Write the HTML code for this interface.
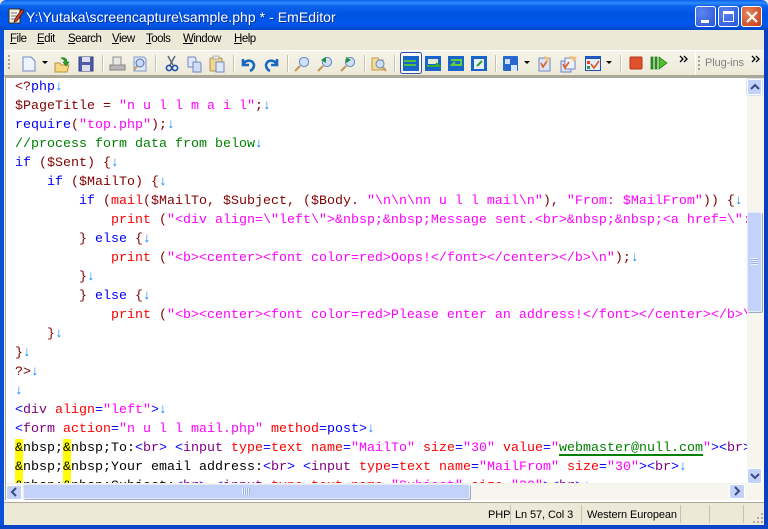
<!DOCTYPE html>
<html><head><meta charset="utf-8"><style>
*{box-sizing:border-box;margin:0;padding:0}
html,body{width:768px;height:529px;overflow:hidden;background:#ece9d8}
body{position:relative;font-family:"Liberation Sans",sans-serif}
.a{position:absolute}
#title{left:0;top:0;width:768px;height:30px;background:linear-gradient(#0a5fe8 0,#2f8cff 3px,#0a62ea 6px,#0054e3 14px,#0058ee 24px,#0049c8 30px);border-radius:6px 6px 0 0}
#tt{left:26px;top:9px;color:#fff;font-size:14px;letter-spacing:.05px;white-space:nowrap;text-shadow:1px 1px 0 #0a2f9a}
.wb{top:6px;width:21px;height:21px;border:1px solid #fff;border-radius:3px;background:radial-gradient(circle at 30% 30%,#5c85ee,#2a55d8)}
#menu{left:4px;top:30px;width:760px;height:20px;font-size:11.5px;letter-spacing:-.5px;color:#000}
#menu span{position:absolute;top:3px}
#menu u{text-decoration:underline}
.sep{top:55px;height:17px;background:#c5c2b0;border-right:1px solid #fff;width:2px}
.grip{width:2px;height:16px;background:repeating-linear-gradient(#a8a595 0 2px,transparent 2px 4px)}
#ed{left:6px;top:78px;width:741px;height:405px;background:#fff;overflow:hidden}
#ln{position:absolute;left:9px;top:0;font:13.33px/19px "Liberation Mono",monospace;color:#000}
#ln div{height:19px;white-space:pre}
.v{color:#800000}.k{color:#0000ff}.s{color:#ff00ff}.c{color:#008000}.n{color:#0080ff}.r{color:#ff0000}.p{color:#800080}.t{color:#0000ff}
.h{background:#ffff00;display:inline-block;height:19px;line-height:19px;vertical-align:top}
.f{color:#ff0000}
.ul{color:#008000;text-decoration:underline;text-decoration-color:#008000;text-decoration-thickness:1.5px;text-underline-offset:3px}
svg{position:absolute;overflow:visible}
</style></head><body>
<div class="a" style="left:0;top:30px;width:4px;height:499px;background:#0a50d8"></div>
<div class="a" style="left:764px;top:30px;width:4px;height:499px;background:#0a40c0"></div>
<div class="a" style="left:0;top:525px;width:768px;height:4px;background:#0a45c8"></div>
<div class="a" id="title"></div>
<svg style="left:8px;top:8px" width="16" height="16"><rect x="1" y="1" width="11" height="14" fill="#f4f0e0" stroke="#403020"/><path d="M3 5h6M3 8h6M3 11h4" stroke="#777"/><path d="M14 1L7 11l-1 3 3-1 7-10z" fill="#d84020" stroke="#301008" stroke-width=".7"/></svg>
<div class="a" id="tt">Y:\Yutaka\screencapture\sample.php * - EmEditor</div>
<div class="a wb" style="left:695px"><div class="a" style="left:5px;top:13px;width:8px;height:3px;background:#fff"></div></div>
<div class="a wb" style="left:718px"><div class="a" style="left:4px;top:4px;width:11px;height:11px;border:1px solid #fff;border-top:3px solid #fff"></div></div>
<div class="a wb" style="left:741px;background:radial-gradient(circle at 30% 30%,#e8845c,#c83a15)"><svg style="left:4px;top:4px" width="12" height="12"><path d="M1 1l10 10M11 1L1 11" stroke="#fff" stroke-width="2.2"/></svg></div>

<div class="a" id="menu">
<span style="left:6px"><u>F</u>ile</span><span style="left:33px"><u>E</u>dit</span><span style="left:64px"><u>S</u>earch</span><span style="left:108px"><u>V</u>iew</span><span style="left:142px"><u>T</u>ools</span><span style="left:179px"><u>W</u>indow</span><span style="left:230px"><u>H</u>elp</span>
</div>
<div class="a" style="left:4px;top:50px;width:760px;height:1px;background:#fff"></div>
<div class="a" style="left:4px;top:51px;width:760px;height:25px;background:linear-gradient(#f6f4ea,#ece9d8)"></div>
<div class="a" style="left:4px;top:75px;width:760px;height:2px;background:#aca899"></div>

<div class="a grip" style="left:8px;top:55px"></div>
<svg style="left:0;top:0" width="768" height="80">
<path d="M23 57h8l4 4v10H23z" fill="#eef2fc" stroke="#7088c8"/>
<path d="M42 61h6l-3 3z" fill="#000"/>
<path d="M55 63h5l1 2h8l-2 7H55z" fill="#f6d880" stroke="#b89040"/><path d="M61 58c4-1 6 1 6 4h2l-3 4-3-4h2c0-2-2-3-4-4z" fill="#30a030" stroke="#107010" stroke-width=".6"/>
<rect x="79" y="57" width="14" height="14" fill="#4c5ca8" stroke="#303c80"/><rect x="82" y="57" width="8" height="5" fill="#dde"/><rect x="82" y="65" width="8" height="6" fill="#dde"/>
<path d="M110 65h15v5h-15z" fill="#b8b8b8" stroke="#808080"/><path d="M113 57h8v8h-8z" fill="#e8e8e8" stroke="#909090"/>
<path d="M134 57h10l2 2v12h-12z" fill="#e0e8f8" stroke="#8098c8"/><circle cx="140" cy="63" r="4" fill="#c8d8f8" stroke="#5070b0"/><path d="M137 66l-3 4" stroke="#c8a060" stroke-width="2"/>
<path d="M168 56l5 9M175 56l-5 9" stroke="#606878" stroke-width="1.5"/><circle cx="169" cy="68" r="2.6" fill="none" stroke="#2050a8" stroke-width="1.6"/><circle cx="175" cy="68" r="2.6" fill="none" stroke="#2050a8" stroke-width="1.6"/>
<path d="M188 57h7l1 2v8h-8z" fill="#e0e8f8" stroke="#7088c0"/><path d="M193 62h7l1 2v8h-8z" fill="#d0dcf4" stroke="#7088c0"/>
<rect x="210" y="58" width="12" height="13" rx="1" fill="#f0d890" stroke="#b09050"/><rect x="213" y="56" width="6" height="3" fill="#e8e8e8" stroke="#909090" stroke-width=".6"/><rect x="216" y="62" width="8" height="10" fill="#e0e8f8" stroke="#7088c0"/>
<path d="M243 59v6h6M243 64c4-5 10-4 11 1 0 3-2 5-4 6" fill="none" stroke="#1868c0" stroke-width="2.6"/>
<path d="M277 59v6h-6M277 64c-4-5-10-4-11 1 0 3 2 5 4 6" fill="none" stroke="#1868c0" stroke-width="2.6"/>
<circle cx="304" cy="62" r="4.6" fill="#d0e0fa" stroke="#6088c0"/><path d="M300 66l-5 5" stroke="#c89860" stroke-width="2.2"/>
<circle cx="327" cy="62" r="4.6" fill="#d0e0fa" stroke="#6088c0"/><path d="M323 66l-5 5" stroke="#c89860" stroke-width="2.2"/><path d="M321 60l5-3v6z" fill="#209030"/>
<circle cx="350" cy="62" r="4.6" fill="#d0e0fa" stroke="#6088c0"/><path d="M346 66l-5 5" stroke="#c89860" stroke-width="2.2"/><path d="M351 60l-5-3v6z" fill="#209030"/>
<path d="M372 58h6l1 2h4v10h-11z" fill="#f6dc98" stroke="#c09848"/><circle cx="380" cy="64" r="4" fill="#d0e0fa" stroke="#6088c0"/><path d="M383 67l3 4" stroke="#c89860" stroke-width="2"/>
<rect x="400.500" y="52.500" width="21" height="21" rx="2" fill="#fafafa" stroke="#3050a8"/>
<rect x="403" y="56" width="16" height="15" fill="#1864c8"/><path d="M404 61h12M404 65h12" stroke="#50c040" stroke-width="2"/>
<rect x="425" y="56" width="16" height="15" fill="#1864c8"/><rect x="428" y="59" width="10" height="5" fill="#e8e8d8"/><path d="M427 66h12l-3-3" stroke="#30b030" stroke-width="2" fill="none"/>
<rect x="448" y="56" width="16" height="15" fill="#1864c8"/><path d="M451 60h10v5h-9l3-3" fill="none" stroke="#60d040" stroke-width="2"/>
<rect x="471" y="56" width="16" height="15" fill="#1864c8"/><rect x="474" y="59" width="10" height="10" fill="#e8f0fc"/><path d="M477 66l5-5" stroke="#30a030" stroke-width="2"/>
<rect x="503" y="56" width="15" height="15" rx="1" fill="#2868d0"/><rect x="505" y="59" width="5" height="5" fill="#d0e0f8"/><rect x="511" y="65" width="6" height="6" fill="#d8e8ff"/>
<path d="M524 61h6l-3 3z" fill="#000"/>
<rect x="539" y="58" width="11" height="13" fill="#dce4f4" stroke="#7088c0"/><path d="M541 63l2 4 4-6" stroke="#e06020" stroke-width="1.6" fill="none"/><path d="M544 56l6 2-3 4z" fill="#f6c070"/>
<rect x="561" y="61" width="10" height="11" fill="#dce4f4" stroke="#7088c0"/><rect x="565" y="58" width="10" height="11" fill="#eef2fc" stroke="#7088c0"/><path d="M563 64l2 4 4-6" stroke="#e06020" stroke-width="1.6" fill="none"/><path d="M569 56l8 1-3 5z" fill="#f6c070"/>
<rect x="585.500" y="56.500" width="15" height="14" fill="#e8f0fc" stroke="#2050b0"/><rect x="586" y="56" width="15" height="3" fill="#2058c0"/><rect x="587" y="61" width="3" height="3" fill="#e04020"/><rect x="587" y="66" width="3" height="3" fill="#20a040"/><path d="M591 64l3 4 5-7" stroke="#e05020" stroke-width="1.6" fill="none"/>
<path d="M606 61h6l-3 3z" fill="#000"/>
<rect x="630" y="57" width="12" height="12" rx="1" fill="#e0502c" stroke="#b03818"/>
<path d="M651 57h2v12h-2zM655 57h2v12h-2z" fill="#30a020" stroke="#107010" stroke-width=".7"/><path d="M659 57l8 6-8 6z" fill="#50c030" stroke="#107010" stroke-width=".7"/>
<path d="M680 56l3 3-3 3M684 56l3 3-3 3" fill="none" stroke="#000" stroke-width="1.3"/>
<path d="M752 56l3 3-3 3M756 56l3 3-3 3" fill="none" stroke="#000" stroke-width="1.3"/>
</svg>
<div class="a sep" style="left:102px"></div><div class="a sep" style="left:155px"></div><div class="a sep" style="left:233px"></div><div class="a sep" style="left:287px"></div><div class="a sep" style="left:364px"></div><div class="a sep" style="left:394px"></div><div class="a sep" style="left:495px"></div><div class="a sep" style="left:620px"></div>
<div class="a" style="left:695px;top:51px;width:1px;height:24px;background:#fff"></div>
<div class="a grip" style="left:698px;top:56px"></div>
<div class="a" style="left:705px;top:57px;font-size:11px;letter-spacing:-.1px;color:#808080">Plug-ins</div>

<div class="a" style="left:4px;top:77px;width:760px;height:426px;background:#f4f2e8"></div>
<div class="a" style="left:5px;top:76px;width:759px;height:2px;background:#aca899"></div>
<div class="a" style="left:5px;top:76px;width:1px;height:424px;background:#aca899"></div>
<div class="a" id="ed"><div id="ln">
<div><span class="v">&lt;?</span><span class="k">php</span><span class="n">↓</span></div>
<div><span class="v">$PageTitle = </span><span class="s">"n u l l m a i l"</span><span class="v">;</span><span class="n">↓</span></div>
<div><span class="k">require</span><span class="v">(</span><span class="s">"top.php"</span><span class="v">);</span><span class="n">↓</span></div>
<div><span class="c">//process form data from below</span><span class="n">↓</span></div>
<div><span class="k">if</span> <span class="v">($Sent) {</span><span class="n">↓</span></div>
<div>    <span class="k">if</span> <span class="v">($MailTo) {</span><span class="n">↓</span></div>
<div>        <span class="k">if</span> <span class="v">(</span><span class="r">mail</span><span class="v">($MailTo, $Subject, ($Body. </span><span class="s">"\n\n\nn u l l mail\n"</span><span class="v">), </span><span class="s">"From: $MailFrom"</span><span class="v">)) {</span><span class="n">↓</span></div>
<div>            <span class="r">print</span> <span class="v">(</span><span class="s">"&lt;div align=\"left\"&gt;&amp;nbsp;&amp;nbsp;Message sent.&lt;br&gt;&amp;nbsp;&amp;nbsp;&lt;a href=\":</span></div>
<div>        <span class="v">}</span> <span class="k">else</span> <span class="v">{</span><span class="n">↓</span></div>
<div>            <span class="r">print</span> <span class="v">(</span><span class="s">"&lt;b&gt;&lt;center&gt;&lt;font color=red&gt;Oops!&lt;/font&gt;&lt;/center&gt;&lt;/b&gt;\n"</span><span class="v">);</span><span class="n">↓</span></div>
<div>        <span class="v">}</span><span class="n">↓</span></div>
<div>        <span class="v">}</span> <span class="k">else</span> <span class="v">{</span><span class="n">↓</span></div>
<div>            <span class="r">print</span> <span class="v">(</span><span class="s">"&lt;b&gt;&lt;center&gt;&lt;font color=red&gt;Please enter an address!&lt;/font&gt;&lt;/center&gt;&lt;/b&gt;\</span></div>
<div>    <span class="v">}</span><span class="n">↓</span></div>
<div><span class="v">}</span><span class="n">↓</span></div>
<div><span class="v">?&gt;</span><span class="n">↓</span></div>
<div><span class="n">↓</span></div>
<div><span class="t">&lt;</span><span class="p">div</span> <span class="f">align</span><span class="t">=</span><span class="s">"left"</span><span class="t">&gt;</span><span class="n">↓</span></div>
<div><span class="t">&lt;</span><span class="p">form</span> <span class="f">action</span><span class="t">=</span><span class="s">"n u l l mail.php"</span> <span class="f">method</span><span class="t">=post&gt;</span><span class="n">↓</span></div>
<div><span class="h">&amp;</span>nbsp;<span class="h">&amp;</span>nbsp;To:<span class="t">&lt;</span><span class="p">br</span><span class="t">&gt;</span> <span class="t">&lt;</span><span class="p">input</span> <span class="f">type</span><span class="t">=</span><span class="f">text</span> <span class="f">name</span><span class="t">=</span><span class="s">"MailTo"</span> <span class="f">size</span><span class="t">=</span><span class="s">"30"</span> <span class="f">value</span><span class="t">=</span><span class="s">"</span><span class="ul">webmaster@null.com</span><span class="s">"</span><span class="t">&gt;&lt;</span><span class="p">br</span><span class="t">&gt;</span></div>
<div><span class="h">&amp;</span>nbsp;<span class="h">&amp;</span>nbsp;Your email address:<span class="t">&lt;</span><span class="p">br</span><span class="t">&gt;</span> <span class="t">&lt;</span><span class="p">input</span> <span class="f">type</span><span class="t">=</span><span class="f">text</span> <span class="f">name</span><span class="t">=</span><span class="s">"MailFrom"</span> <span class="f">size</span><span class="t">=</span><span class="s">"30"</span><span class="t">&gt;&lt;</span><span class="p">br</span><span class="t">&gt;</span><span class="n">↓</span></div>
<div><span class="h">&amp;</span>nbsp;<span class="h">&amp;</span>nbsp;Subject:<span class="t">&lt;</span><span class="p">br</span><span class="t">&gt;</span> <span class="t">&lt;</span><span class="p">input</span> <span class="f">type</span><span class="t">=</span><span class="f">text</span> <span class="f">name</span><span class="t">=</span><span class="s">"Subject"</span> <span class="f">size</span><span class="t">=</span><span class="s">"30"</span><span class="t">&gt;&lt;</span><span class="p">br</span><span class="t">&gt;</span><span class="n">↓</span></div>
</div></div>

<div class="a" style="left:747px;top:78px;width:17px;height:406px;background:#f6f5ee"></div>
<div class="a" style="left:747px;top:79px;width:15px;height:16px;background:#c3d2f6;border:1px solid #fff;border-radius:2px;box-shadow:0 0 0 1px #d6dff5"></div>
<svg style="left:747px;top:79px" width="16" height="16"><path d="M4 10l4-4 4 4" fill="none" stroke="#3a4a8a" stroke-width="2"/></svg>
<div class="a" style="left:747px;top:212px;width:15px;height:100px;background:#c3d2f8;border:1px solid #e6ebf8;border-radius:2px;box-shadow:1px 1px 0 #9fa8c4"></div>
<div class="a" style="left:751px;top:258px;width:7px;height:7px;background:repeating-linear-gradient(#eef2fc 0 1px,#9fb0e0 1px 2px)"></div>
<div class="a" style="left:747px;top:468px;width:15px;height:16px;background:#c3d2f6;border:1px solid #fff;border-radius:2px"></div>
<svg style="left:747px;top:468px" width="16" height="16"><path d="M4 6l4 4 4-4" fill="none" stroke="#3a4a8a" stroke-width="2"/></svg>
<div class="a" style="left:6px;top:484px;width:758px;height:16px;background:#f6f5ee"></div>
<div class="a" style="left:6px;top:485px;width:16px;height:15px;background:#c3d2f6;border:1px solid #fff;border-radius:2px"></div>
<svg style="left:6px;top:485px" width="16" height="15"><path d="M10 3l-4 4 4 4" fill="none" stroke="#3a4a8a" stroke-width="2"/></svg>
<div class="a" style="left:23px;top:484px;width:447px;height:15px;background:#c3d2f8;border:1px solid #e6ebf8;border-radius:2px;box-shadow:1px 1px 0 #9fa8c4"></div>
<div class="a" style="left:242px;top:488px;width:8px;height:7px;background:repeating-linear-gradient(90deg,#eef2fc 0 1px,#9fb0e0 1px 2px)"></div>
<div class="a" style="left:729px;top:484px;width:16px;height:15px;background:#c3d2f6;border:1px solid #fff;border-radius:2px"></div>
<svg style="left:729px;top:484px" width="16" height="15"><path d="M6 3l4 4-4 4" fill="none" stroke="#3a4a8a" stroke-width="2"/></svg>
<div class="a" style="left:4px;top:500px;width:760px;height:2px;background:#fff"></div>
<div class="a" style="left:4px;top:502px;width:760px;height:23px;background:#ece9d8;border-top:1px solid #aca899;font-size:11px;letter-spacing:-.1px;color:#000">
<span class="a" style="left:484px;top:6px">PHP</span>
<span class="a" style="left:511px;top:6px">Ln 57, Col 3</span>
<span class="a" style="left:583px;top:6px">Western European</span>
</div>
<div class="a" style="left:510px;top:505px;width:1px;height:18px;background:#c5c2b0"></div>
<div class="a" style="left:581px;top:505px;width:1px;height:18px;background:#c5c2b0"></div>
<div class="a" style="left:680px;top:505px;width:1px;height:18px;background:#c5c2b0"></div>
<div class="a" style="left:709px;top:505px;width:1px;height:18px;background:#c5c2b0"></div>
<div class="a" style="left:743px;top:505px;width:1px;height:18px;background:#c5c2b0"></div>
<svg style="left:752px;top:512px" width="12" height="12"><path d="M9 1h2v2H9zM5 5h2v2H5zM9 5h2v2H9zM1 9h2v2H1zM5 9h2v2H5zM9 9h2v2H9z" fill="#b0ad9c"/></svg>
</body></html>
